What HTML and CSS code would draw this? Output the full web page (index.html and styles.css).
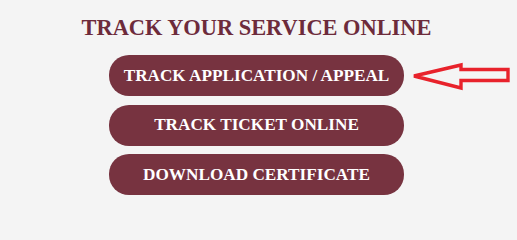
FILE: index.html
```html
<!DOCTYPE html>
<html>
<head>
<meta charset="utf-8">
<link rel="stylesheet" href="styles.css">
</head>
<body>
<div class="track">
  <h2 class="track-title">TRACK YOUR SERVICE ONLINE</h2>
  <div class="track-buttons">
    <div class="btn-row">
      <a class="track-btn" href="#">TRACK APPLICATION / APPEAL</a>
      <svg class="pointer-arrow" width="104" height="32" viewBox="0 0 104 32">
        <path d="M4 16 L51 5 L51 9.5 L98 9.5 L98 20.5 L51 20.5 L51 28 Z" fill="none" stroke="#e8222b" stroke-width="3.4" stroke-linejoin="miter"/>
      </svg>
    </div>
    <a class="track-btn" href="#">TRACK TICKET ONLINE</a>
    <a class="track-btn" href="#">DOWNLOAD CERTIFICATE</a>
  </div>
</div>
</body>
</html>
```
FILE: styles.css
```css
html, body {
  margin: 0;
  padding: 0;
  background: #f4f4f4;
}
body {
  width: 517px;
  height: 206px;
  font-family: "Liberation Serif", "Times New Roman", serif;
}
.track {
  display: flex;
  flex-direction: column;
  align-items: center;
  padding-top: 15px;
  padding-right: 4px;
}
.track-title {
  margin: 0;
  font-size: 22.4px;
  line-height: 26px;
  font-weight: bold;
  color: #6d2b3b;
}
.track-buttons {
  margin-top: 14px;
  display: flex;
  flex-direction: column;
  gap: 8.5px;
}
.btn-row {
  position: relative;
}
.track-btn {
  display: flex;
  align-items: center;
  justify-content: center;
  width: 295px;
  height: 41px;
  border-radius: 20px;
  background: #773340;
  color: #ffffff;
  font-size: 17.2px;
  font-weight: bold;
  text-decoration: none;
}
.pointer-arrow {
  position: absolute;
  left: 301px;
  top: 5px;
}
```
